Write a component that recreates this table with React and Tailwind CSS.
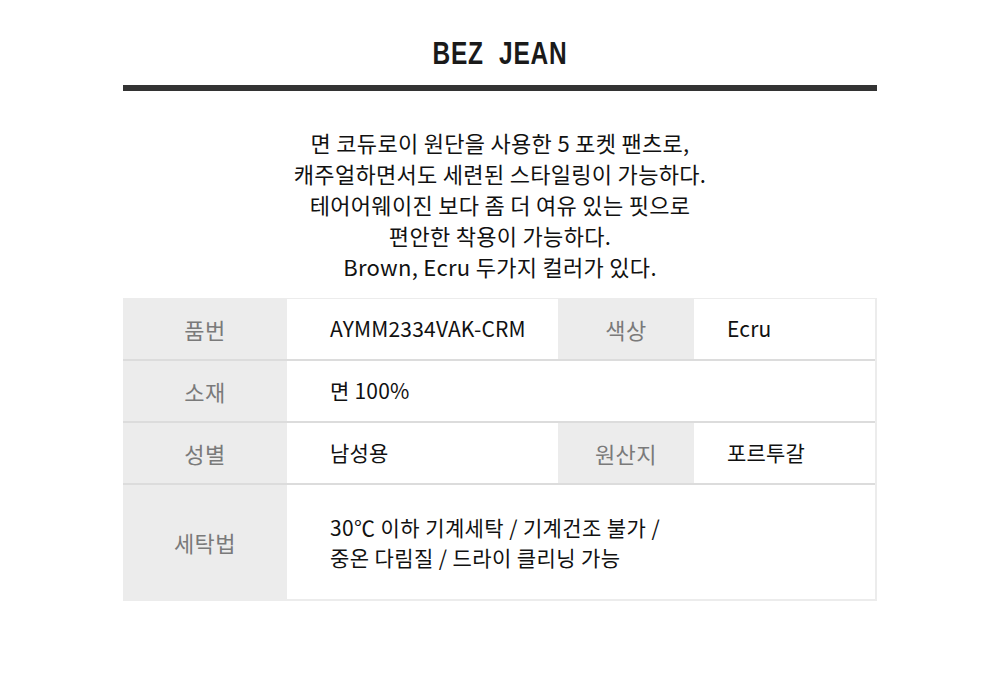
const rows = [
  { cells: [["품번", "AYMM2334VAK-CRM"], ["색상", "Ecru"]] },
  { cells: [["소재", "면 100%"]] },
  { cells: [["성별", "남성용"], ["원산지", "포르투갈"]] },
];

const font = { fontFamily: '"Noto Sans CJK KR", "Noto Sans", sans-serif' };

export default function App() {
  return (
    <div className="w-[1000px] h-[685px] bg-white" style={font}>
      <div className="w-[754px] mx-auto pt-[34px]">
        <h1
          className="text-center text-[31px] leading-[40px] font-bold text-[#1a1a1a] tracking-[1px] scale-x-[0.79]"
          style={{ fontFamily: '"Liberation Sans", Arial, sans-serif' }}
        >
          BEZ&nbsp; JEAN
        </h1>
        <div className="mt-[11px] h-[6px] bg-[#333333]" />

        <div className="mt-[36px] text-center text-[22px] leading-[31px] tracking-[0.3px] text-[#111] font-normal">
          <p>면 코듀로이 원단을 사용한 5 포켓 팬츠로,</p>
          <p>캐주얼하면서도 세련된 스타일링이 가능하다.</p>
          <p>테어어웨이진 보다 좀 더 여유 있는 핏으로</p>
          <p>편안한 착용이 가능하다.</p>
          <p>Brown, Ecru 두가지 컬러가 있다.</p>
        </div>

        <div className="mt-[16px] border-t border-r-2 border-b-2 border-[#ececec]">
          {rows.map((row, i) => (
            <div key={i} className="flex h-[62px] border-b-2 border-[#dcdcdc]">
              <div className="w-[164px] shrink-0 bg-[#ececec] flex items-center justify-center text-[22px] tracking-[0.5px] text-[#7a7a7a]">
                {row.cells[0][0]}
              </div>
              <div className="w-[271px] shrink-0 flex items-center pl-[43px] text-[21px] tracking-[0.2px] text-[#111]">
                {row.cells[0][1]}
              </div>
              {row.cells[1] ? (
                <>
                  <div className="w-[136px] shrink-0 bg-[#ececec] flex items-center justify-center text-[22px] tracking-[0.5px] text-[#7a7a7a]">
                    {row.cells[1][0]}
                  </div>
                  <div className="flex-1 flex items-center pl-[33px] text-[21px] tracking-[0.2px] text-[#111]">
                    {row.cells[1][1]}
                  </div>
                </>
              ) : (
                <div className="flex-1" />
              )}
            </div>
          ))}
          <div className="flex h-[114px]">
            <div className="w-[164px] shrink-0 bg-[#ececec] flex items-center justify-center text-[22px] tracking-[0.5px] text-[#7a7a7a]">
              세탁법
            </div>
            <div className="flex-1 flex flex-col justify-center pl-[43px] text-[21px] leading-[30px] tracking-[0.4px] text-[#111]">
              <p>30℃ 이하 기계세탁 / 기계건조 불가 /</p>
              <p>중온 다림질 / 드라이 클리닝 가능</p>
            </div>
          </div>
        </div>
      </div>
    </div>
  );
}
